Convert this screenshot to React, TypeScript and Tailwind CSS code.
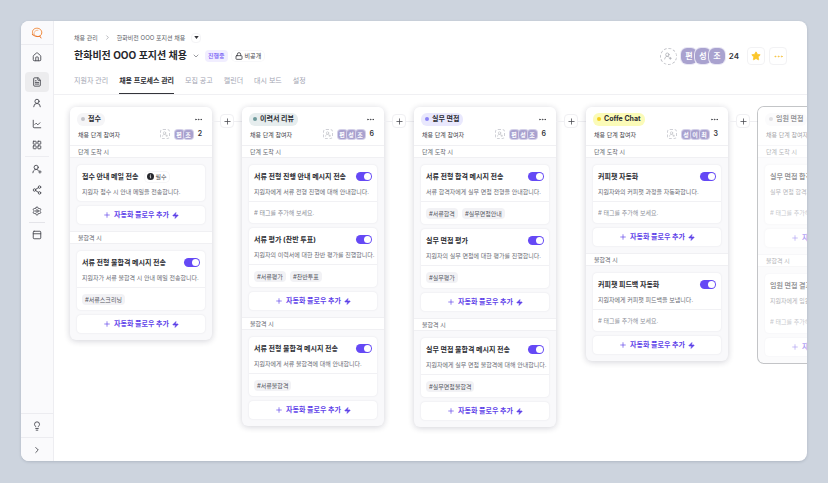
import React from 'react';
import {
  ChevronDown,
  ChevronRight,
  FileText,
  House,
  LayoutGrid,
  Lightbulb,
  LineChart,
  Lock,
  MoreHorizontal,
  PanelTop,
  Plus,
  Settings,
  Share2,
  Star,
  UserRound,
  UserRoundPlus,
  Zap,
} from 'lucide-react';

interface Flow {
  title: string;
  desc: string;
  tags?: string[];
  required?: boolean;
}

interface Stage {
  id: string;
  name: string;
  pill: string;
  dot: string;
  members: string[];
  arrive: Flow[];
  reject: Flow[];
  count?: number;
  faded?: boolean;
}

const stages: Stage[] = [
  {
    id: 'apply',
    name: '접수',
    pill: 'bg-[#f5f5f7]',
    dot: 'bg-[#c3c4ca]',
    members: ['편', '조'],
    count: 2,
    arrive: [{ title: '접수 안내 메일 전송', desc: '지원자 접수 시 안내 메일을 전송합니다.', required: true }],
    reject: [{ title: '서류 전형 불합격 메시지 전송', desc: '지원자가 서류 불합격 시 안내 메일 전송합니다.', tags: ['#서류스크리닝'] }],
  },
  {
    id: 'resume',
    name: '이력서 리뷰',
    pill: 'bg-[#e6edee]',
    dot: 'bg-[#6f9a9b]',
    members: ['편', '성', '조'],
    count: 6,
    arrive: [
      { title: '서류 전형 진행 안내 메시지 전송', desc: '지원자에게 서류 전형 진행에 대해 안내합니다.', tags: [] },
      { title: '서류 평가 (찬반 투표)', desc: '지원자의 이력서에 대한 찬반 평가를 진행합니다.', tags: ['#서류평가', '#찬반투표'] },
    ],
    reject: [{ title: '서류 전형 불합격 메시지 전송', desc: '지원자에게 서류 불합격에 대해 안내합니다.', tags: ['#서류불합격'] }],
  },
  {
    id: 'interview',
    name: '실무 면접',
    pill: 'bg-[#e9e8fd]',
    dot: 'bg-[#8b83f5]',
    members: ['편', '성', '조'],
    count: 6,
    arrive: [
      { title: '서류 전형 합격 메시지 전송', desc: '서류 합격자에게 실무 면접 전형을 안내합니다.', tags: ['#서류합격', '#실무면접안내'] },
      { title: '실무 면접 평가', desc: '지원자의 실무 면접에 대한 평가를 진행합니다.', tags: ['#실무평가'] },
    ],
    reject: [{ title: '실무 면접 불합격 메시지 전송', desc: '지원자에게 실무 면접 불합격에 대해 안내합니다.', tags: ['#실무면접불합격'] }],
  },
  {
    id: 'coffee',
    name: 'Coffe Chat',
    pill: 'bg-[#fbfbb8]',
    dot: 'bg-[#f5cf1d]',
    members: ['성', '이', '최'],
    count: 3,
    arrive: [{ title: '커피챗 자동화', desc: '지원자와의 커피챗 과정을 자동화합니다.', tags: [] }],
    reject: [{ title: '커피챗 피드백 자동화', desc: '지원자에게 커피챗 피드백을 보냅니다.', tags: [] }],
  },
  {
    id: 'executive',
    name: '임원 면접',
    pill: 'bg-[#f8f8fa]',
    dot: 'bg-[#c3c4ca]',
    members: [],
    arrive: [{ title: '실무 면접 합격', desc: '실무 면접 합격자', tags: [] }],
    reject: [{ title: '임원 면접 결과', desc: '지원자에게 임원', tags: [] }],
    faded: true,
  },
];

const mainMenu = [
  { label: '채용 관리', icon: FileText, active: true },
  { label: '지원자', icon: UserRound },
  { label: '통계', icon: LineChart },
  { label: '보드', icon: LayoutGrid },
];

const subMenu = [
  { label: '멤버 초대', icon: UserRoundPlus },
  { label: '공유', icon: Share2 },
  { label: '설정', icon: Settings },
];

const tabs = ['지원자 관리', '채용 프로세스 관리', '모집 공고', '캘린더', '대시 보드', '설정'];

function SideButton({ label, icon: Icon, active = false }: { label: string; icon: typeof House; active?: boolean }) {
  return (
    <button
      aria-label={label}
      className={`flex h-5 w-6 items-center justify-center rounded-sm text-[#4b4d54] ${active ? 'bg-[#ececee]' : ''}`}
    >
      <Icon className="size-[10px]" strokeWidth={2.2} />
    </button>
  );
}

function Sidebar() {
  return (
    <aside className="flex w-[33px] shrink-0 flex-col items-center border-r border-[#ededf1] bg-[#fafafc]">
      <a href="#" aria-label="홈으로" className="flex h-6 w-full items-center justify-center border-b border-[#ececf0]">
        <svg viewBox="0 0 24 24" className="size-3" fill="none" strokeLinecap="round">
          <path d="M4 15C1 9 4 3 11 2.500C18 2 22 7 21.500 12C21 17 17 20 12 19" stroke="#f08a3c" strokeWidth="2" />
          <path d="M12 19C7 18 5.500 14 6.500 11C7.500 7.500 11 6 14 6.500" stroke="#f5ab72" strokeWidth="1.600" />
          <path d="M2.500 15C7 18.500 12 20 18 18.500L20 22" stroke="#e9762b" strokeWidth="2" />
        </svg>
      </a>
      <nav className="flex w-full flex-col items-center pt-[2px]">
        <SideButton label="홈" icon={House} />
        <div className="mt-[5px] flex flex-col items-center gap-px">
          {mainMenu.map((item) => (
            <SideButton key={item.label} {...item} />
          ))}
        </div>
        <div className="mt-px mb-[2px] w-6 border-t border-[#ededf1]" />
        <div className="flex flex-col items-center gap-px">
          {subMenu.map((item) => (
            <SideButton key={item.label} {...item} />
          ))}
        </div>
        <div className="mt-px mb-[2px] w-4 border-t border-[#e4e4e9]" />
        <SideButton label="창" icon={PanelTop} />
      </nav>
      <div className="mt-auto flex w-full flex-col">
        <div className="flex h-6 items-center justify-center border-t border-[#ececf0]">
          <SideButton label="도움말" icon={Lightbulb} />
        </div>
        <div className="flex h-6 items-center justify-center border-t border-[#ececf0]">
          <SideButton label="펼치기" icon={ChevronRight} />
        </div>
      </div>
    </aside>
  );
}

function Header() {
  return (
    <header className="border-b border-[#f0f0f3] px-5 pt-[10px]">
      <div className="flex items-center justify-between">
        <div className="min-w-0">
          <div className="flex h-[10px] items-center gap-[6px] text-[6px] text-[#5d5f68]">
            <a href="#">채용 관리</a>
            <ChevronRight className="size-[7px] text-[#8b8d96]" />
            <a href="#">한화비전 OOO 포지션 채용</a>
            <button aria-label="포지션 선택" className="flex size-[10px] items-center justify-center rounded-sm border border-[#f4f4f6]">
              <svg viewBox="0 0 6 4" className="h-[3px] w-[5px]" fill="#33343a">
                <path d="M0 0h6L3 4z" />
              </svg>
            </button>
          </div>
          <div className="mt-[5px] flex h-4 items-center">
            <h1 className="text-[10px] font-bold text-[#26272c]">한화비전 OOO 포지션 채용</h1>
            <button aria-label="포지션 메뉴" className="ml-[5px] text-[#66686f]">
              <ChevronDown className="size-2" />
            </button>
            <span className="ml-[5px] rounded-sm bg-[#f1eeff] px-[3px] py-px text-[6px] leading-[10px] font-medium text-[#7357f5]">진행중</span>
            <span className="ml-1 flex items-center gap-[2px] rounded-sm px-[3px] text-[6px] leading-[10px] text-[#3c3d43] ring-1 ring-[#f8f8fa]">
              <Lock className="size-2" strokeWidth={2.5} />
              비공개
            </span>
          </div>
        </div>
        <div className="mt-4 flex items-center gap-1">
          <button aria-label="멤버 추가" className="flex size-[17px] items-center justify-center rounded-full border border-dashed border-[#c2c3c9] text-[#a2a3aa]">
            <UserRoundPlus className="size-2" />
          </button>
          <div className="flex -space-x-[2px]">
            {['편', '성', '조'].map((m) => (
              <span key={m} className="flex size-4 items-center justify-center rounded-[6px] bg-[#a9a2cf] text-[8px] font-bold text-white ring-1 ring-[#e9e7f4]">
                {m}
              </span>
            ))}
          </div>
          <span className="text-[8px] font-semibold text-[#33343a]">24</span>
          <button aria-label="즐겨찾기" className="ml-1 flex size-[18px] items-center justify-center rounded-sm border border-[#f2f2f4] text-[#fbc62b]">
            <Star className="size-[10px]" fill="currentColor" />
          </button>
          <button aria-label="더보기" className="flex size-[18px] items-center justify-center rounded-sm border border-[#f2f2f4] text-[#f6c445]">
            <MoreHorizontal className="size-[11px]" />
          </button>
        </div>
      </div>
      <div role="tablist" className="mt-[6px] flex gap-[11px]">
        {tabs.map((tab, i) => (
          <button
            key={tab}
            role="tab"
            aria-selected={i === 1}
            className={`h-[23px] border-b pb-px text-[7px] whitespace-nowrap ${
              i === 1 ? 'border-[#33343a] font-bold text-[#2c2d33]' : 'border-transparent text-[#a3a5b3]'
            }`}
          >
            {tab}
          </button>
        ))}
      </div>
    </header>
  );
}

function FlowCard({ flow, id, faded }: { flow: Flow; id: string; faded?: boolean }) {
  return (
    <div className="rounded-sm bg-white shadow-[0_0_2px_rgba(30,30,60,0.1)]">
      <div className="flex h-9 flex-col justify-center gap-[5px] px-[5px] pt-px">
        <div className="flex h-[10px] items-center justify-between">
          <label htmlFor={id} className="text-[7px] leading-[10px] font-bold whitespace-nowrap text-[#2b2c32]">
            {flow.title}
          </label>
          {flow.required && (
            <span className="mr-auto ml-[6px] flex items-center gap-[2px] rounded-sm px-[2px] text-[6px] leading-[10px] text-[#44454c] ring-1 ring-[#f6f6f8]">
              <svg viewBox="0 0 14 14" className="size-[7px]">
                <circle cx="7" cy="7" r="7" fill="#26272c" />
                <circle cx="7" cy="4" r="1.200" fill="#fff" />
                <path d="M5.500 6.500H7.200V10.500" stroke="#fff" strokeWidth="1.500" fill="none" />
              </svg>
              필수
            </span>
          )}
          {!flow.required && !faded && (
            <input
              id={id}
              type="checkbox"
              role="switch"
              defaultChecked
              className="h-[9px] w-4 shrink-0 appearance-none rounded-full bg-[#c9cad2] p-px before:block before:size-[7px] before:rounded-full before:bg-white checked:bg-[#6549f5] checked:before:ml-[7px]"
            />
          )}
        </div>
        <p className="text-[6px] leading-[9px] whitespace-nowrap text-[#696b74]">{flow.desc}</p>
      </div>
      {flow.tags && (
        <div
          className={`flex items-center gap-1 border-t px-[5px] ${
            faded ? 'h-[23px] border-transparent' : flow.tags.length ? 'h-[23px] border-[#f1f1f4]' : 'h-[22px] border-[#f1f1f4]'
          }`}
        >
          {flow.tags.map((tag) => (
            <span key={tag} className="rounded-sm bg-[#f2f2f5] px-[3px] text-[6px] leading-[11px] text-[#55575f]">
              {tag}
            </span>
          ))}
          {flow.tags.length === 0 && (
            <input
              aria-label="태그"
              placeholder="# 태그를 추가해 보세요."
              className="w-full bg-transparent text-[6px] leading-[10px] outline-none placeholder:text-[#8d8f99]"
            />
          )}
        </div>
      )}
    </div>
  );
}

function FlowSection({ label, flows, id, faded }: { label: string; flows: Flow[]; id: string; faded?: boolean }) {
  return (
    <section>
      <h3 className="h-[13px] border-y border-[#f0f0f3] bg-white px-2 text-[6px] leading-[11px] text-[#66686f]">{label}</h3>
      <div className="flex flex-col gap-[5px] p-[7px]">
        {flows.map((flow, i) => (
          <FlowCard key={flow.title} flow={flow} id={`${id}-${i}`} faded={faded} />
        ))}
        <button className="flex h-[18px] items-center justify-center gap-[3px] rounded-sm bg-white text-[7px] font-bold whitespace-nowrap text-[#5f43e9] shadow-[0_0_2px_rgba(30,30,60,0.1)]">
          <Plus className="size-2" strokeWidth={2} />
          자동화 플로우 추가
          <Zap className="size-[7px]" fill="currentColor" />
        </button>
      </div>
    </section>
  );
}

function StageColumn({ stage }: { stage: Stage }) {
  return (
    <article
      className={`w-[142px] shrink-0 overflow-hidden rounded-md bg-[#f9f9fb] ${
        stage.faded ? 'opacity-50 ring-1 ring-[#888b90]' : 'shadow-[0_1px_6px_rgba(30,30,60,0.2)]'
      }`}
    >
      <div className="flex h-[38px] flex-col justify-center gap-[3px] bg-white px-[7px]">
        <div className="flex items-center justify-between">
          <h2 className={`flex h-[13px] items-center gap-[3px] rounded-md px-1 text-[7px] font-bold text-[#2b2c32] ${stage.pill}`}>
            <span className={`size-1 rounded-full ${stage.dot}`} />
            {stage.name}
          </h2>
          <button aria-label={`${stage.name} 더보기`} className="mr-[2px] text-[#3c3d43]">
            <MoreHorizontal className="size-[9px]" strokeWidth={2} />
          </button>
        </div>
        <div className="flex h-[11px] items-center">
          <span className="mr-auto pl-px text-[6px] text-[#44454c]">채용 단계 참여자</span>
          <button
            aria-label={`${stage.name} 참여자 추가`}
            className="flex size-[10px] items-center justify-center rounded-[3px] border border-dashed border-[#cfd0d6] text-[#b5b6bd]"
          >
            <UserRoundPlus className="size-[6px]" />
          </button>
          <div className="ml-[5px] flex">
            {stage.members.map((m) => (
              <span key={m} className="flex size-[9px] items-center justify-center rounded-[3px] bg-[#a9a2cf] text-[6px] font-bold text-white ring-1 ring-[#d3cfe8]">
                {m}
              </span>
            ))}
          </div>
          <span className="mr-[3px] ml-[5px] text-[7px] font-semibold text-[#33343a]">{stage.count}</span>
        </div>
      </div>
      <FlowSection label="단계 도착 시" flows={stage.arrive} id={`${stage.id}-arrive`} faded={stage.faded} />
      <FlowSection label="불합격 시" flows={stage.reject} id={`${stage.id}-reject`} faded={stage.faded} />
    </article>
  );
}

function Connector() {
  return (
    <div className="flex w-[30px] shrink-0 items-center pt-[7px]">
      <span className="flex-1 border-t border-[#efeff2]" />
      <button aria-label="단계 추가" className="flex size-[14px] items-center justify-center rounded-sm border border-[#f0f0f3] bg-white text-[#44454c]">
        <Plus className="size-[9px]" />
      </button>
      <span className="flex-1 border-t border-[#efeff2]" />
    </div>
  );
}

export default function App() {
  return (
    <div className="flex min-h-screen bg-[#cdd4de] p-[21px] pb-[22px] font-['Inter','Noto_Sans_CJK_KR',sans-serif]">
      <div className="flex min-w-0 flex-1 overflow-hidden rounded-lg bg-white shadow-[0_1px_3px_rgba(60,70,90,0.2)]">
        <Sidebar />
        <div className="min-w-0 flex-1">
          <Header />
          <main className="flex items-start overflow-hidden px-4 pt-3 pb-4">
            {stages.map((stage, i) => (
              <React.Fragment key={stage.id}>
                {i > 0 && <Connector />}
                <StageColumn stage={stage} />
              </React.Fragment>
            ))}
          </main>
        </div>
      </div>
    </div>
  );
}
